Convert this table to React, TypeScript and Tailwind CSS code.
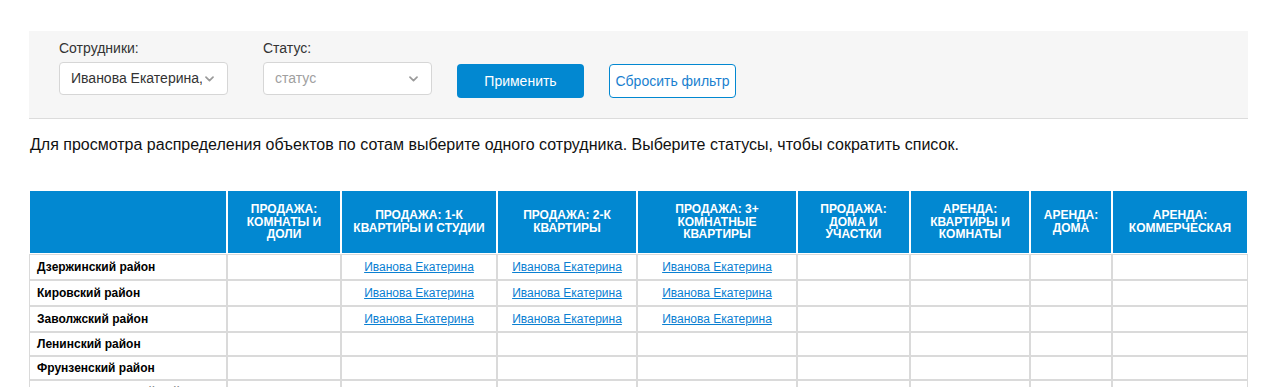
const COLUMNS = [
  { w: "w-[198px]", lines: [] as string[] },
  { w: "w-[114px]", lines: ["Продажа:", "комнаты и", "доли"] },
  { w: "w-[156px]", lines: ["Продажа: 1-к", "квартиры и студии"] },
  { w: "w-[140px]", lines: ["Продажа: 2-к", "квартиры"] },
  { w: "w-[160px]", lines: ["Продажа: 3+", "комнатные", "квартиры"] },
  { w: "w-[113px]", lines: ["Продажа:", "дома и", "участки"] },
  { w: "w-[120px]", lines: ["Аренда:", "квартиры и", "комнаты"] },
  { w: "w-[82px]", lines: ["Аренда:", "дома"] },
  { w: "w-[136px]", lines: ["Аренда:", "коммерческая"] },
];

const EMPLOYEE = "Иванова Екатерина";

// районы и в каких колонках стоит сотрудник
const ROWS = [
  { name: "Дзержинский район", linked: [2, 3, 4] },
  { name: "Кировский район", linked: [2, 3, 4] },
  { name: "Заволжский район", linked: [2, 3, 4] },
  { name: "Ленинский район", linked: [] },
  { name: "Фрунзенский район", linked: [] },
  { name: "Красноперекопский район", linked: [] },
];

function Chevron() {
  return (
    <svg width="9" height="6" viewBox="0 0 9 6" className="shrink-0" aria-hidden>
      <polyline
        points="1,1.2 4.5,4.6 8,1.2"
        fill="none"
        stroke="#9a9a9a"
        strokeWidth="1.7"
        strokeLinecap="round"
        strokeLinejoin="round"
      />
    </svg>
  );
}

function Field({ label, children }: { label: string; children: React.ReactNode }) {
  return (
    <div className="flex flex-col">
      <div className="h-[16px] text-[14px] leading-[16px] text-[#333]">{label}</div>
      <div className="mt-[6px] flex h-[33px] w-[169px] items-center rounded-[4px] border border-[#d6d6d6] bg-white pl-[11px] pr-[13px]">
        {children}
      </div>
    </div>
  );
}

export default function App() {
  return (
    <div className="min-h-screen bg-white pt-[31px] font-['Liberation_Sans',Arial,sans-serif] text-black">
      <div className="ml-[29px] w-[1219px]">
        {/* Фильтр */}
        <div className="flex h-[88px] items-start gap-[35px] border-b border-[#dcdcdc] bg-[#f6f6f6] pl-[30px] pt-[9px]">
          <Field label="Сотрудники:">
            <span className="min-w-0 flex-1 overflow-hidden whitespace-nowrap text-[14px] text-[#333]">
              {EMPLOYEE},
            </span>
            <span className="ml-[3px]">
              <Chevron />
            </span>
          </Field>
          <Field label="Статус:">
            <span className="flex-1 text-[14px] text-[#a0a0a0]">статус</span>
            <Chevron />
          </Field>
          <div className="-ml-[10px] mt-[24px] flex gap-[25px]">
            <button className="h-[34px] w-[127px] rounded-[4px] bg-[#0288d1] text-[14px] text-white">
              Применить
            </button>
            <button className="h-[34px] w-[127px] rounded-[4px] border border-[#0288d1] bg-white text-[14px] text-[#1a7fcf]">
              Сбросить фильтр
            </button>
          </div>
        </div>

        <p className="mt-[17px] ml-[1px] text-[16px] leading-[18px] text-[#111]">
          Для просмотра распределения объектов по сотам выберите одного сотрудника. Выберите статусы, чтобы
          сократить список.
        </p>

        {/* Таблица */}
        <table className="mt-[36px] w-[1219px] table-fixed border-separate border-spacing-0">
          <colgroup>
            {COLUMNS.map((c, i) => (
              <col key={i} className={c.w} />
            ))}
          </colgroup>
          <thead>
            <tr>
              {COLUMNS.map((c, i) => (
                <th
                  key={i}
                  className="h-[64px] border border-white bg-[#0288d1] px-1 text-center align-middle text-[12px] font-bold uppercase leading-[12.7px] text-white"
                >
                  {c.lines.map((l, j) => (
                    <div key={j}>{l}</div>
                  ))}
                </th>
              ))}
            </tr>
          </thead>
          <tbody>
            {ROWS.map((r) => (
              <tr key={r.name}>
                {COLUMNS.map((_, i) => (
                  <td key={i} className="border border-[#dadada] p-0">
                    {i === 0 ? (
                      <div
                        className={`flex ${r.linked.length ? "h-[24px]" : "h-[22px]"} items-center pl-[7px] text-[12px] font-bold whitespace-nowrap`}
                      >
                        {r.name}
                      </div>
                    ) : (
                      <div
                        className={`flex ${r.linked.length ? "h-[24px]" : "h-[22px]"} items-center justify-center text-[12px]`}
                      >
                        {r.linked.includes(i) && (
                          <a href="#" className="text-[#0a80d2] underline">
                            {EMPLOYEE}
                          </a>
                        )}
                      </div>
                    )}
                  </td>
                ))}
              </tr>
            ))}
          </tbody>
        </table>
      </div>
    </div>
  );
}
